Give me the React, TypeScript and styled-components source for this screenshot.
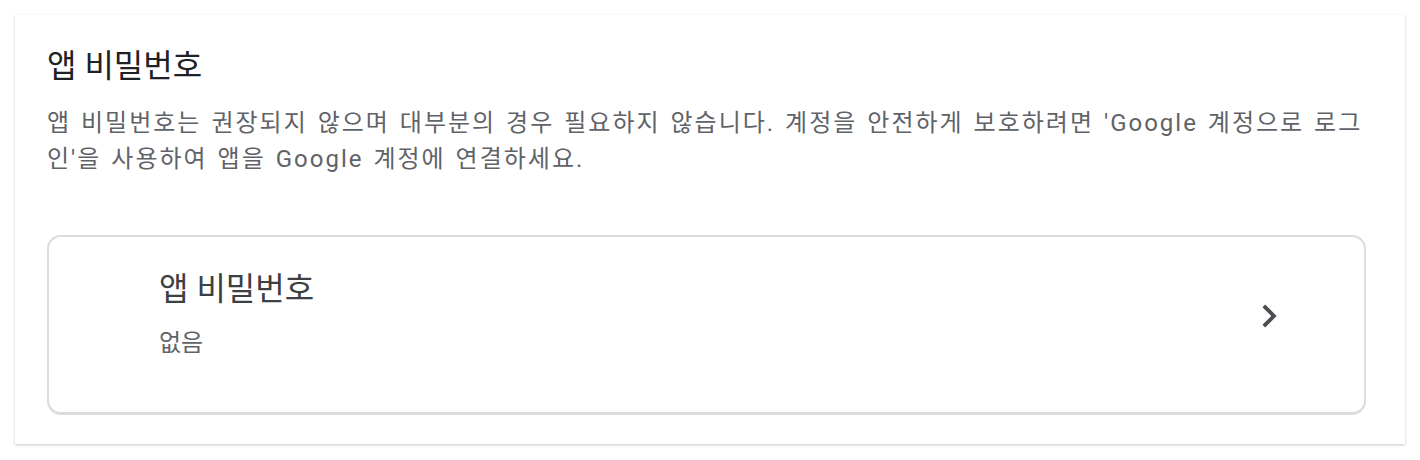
import React from "react";
import styled, { createGlobalStyle } from "styled-components";

const Global = createGlobalStyle`
  html, body { margin: 0; padding: 0; background: #ffffff; }
  body { font-family: Roboto, "Noto Sans CJK KR", sans-serif; }
`;

const Page = styled.div`
  padding: 15px;
`;

const Card = styled.section`
  background: #ffffff;
  box-shadow: 0 1px 3px rgba(60, 64, 67, 0.2), 0 1px 2px rgba(60, 64, 67, 0.1);
  padding: 31px 39px 29px 32px;
  display: flex;
  flex-direction: column;
`;

const Heading = styled.h2`
  margin: 0;
  font-size: 32px;
  line-height: 40px;
  font-weight: 400;
  color: #202124;
`;

const Description = styled.p`
  margin: 19px 0 0 0;
  font-size: 24px;
  line-height: 36px;
  letter-spacing: 2px;
  word-spacing: 2px;
  color: #5f6368;
`;

const Item = styled.button`
  margin-top: 58px;
  display: flex;
  align-items: center;
  width: 100%;
  height: 180px;
  box-sizing: border-box;
  background: #fff;
  border: 2px solid #dadce0;
  border-bottom-width: 3px;
  border-radius: 14px;
  padding: 32px 72px 54px 110px;
  text-align: left;
  cursor: pointer;
  font-family: inherit;
`;

const ItemText = styled.div`
  flex: 1;
  display: flex;
  flex-direction: column;
  gap: 19px;
`;

const ItemTitle = styled.div`
  font-size: 32px;
  line-height: 40px;
  color: #3c4043;
`;

const ItemValue = styled.div`
  font-size: 24px;
  line-height: 30px;
  color: #5f6368;
`;

const ChevronBox = styled.span`
  display: flex;
  width: 46px;
  height: 46px;
  margin-top: 5px;
`;

const Chevron = () => (
  <ChevronBox>
    <svg width="46" height="46" viewBox="0 0 24 24" aria-hidden="true">
      <path d="M10 6 8.59 7.41 13.17 12l-4.58 4.59L10 18l6-6z" fill="#4a4d51" />
    </svg>
  </ChevronBox>
);

export default function App() {
  return (
    <>
      <Global />
      <Page>
        <Card>
          <Heading>앱 비밀번호</Heading>
          <Description>
            앱 비밀번호는 권장되지 않으며 대부분의 경우 필요하지 않습니다. 계정을 안전하게 보호하려면 'Google 계정으로 로그
            인'을 사용하여 앱을 Google 계정에 연결하세요.
          </Description>
          <Item>
            <ItemText>
              <ItemTitle>앱 비밀번호</ItemTitle>
              <ItemValue>없음</ItemValue>
            </ItemText>
            <Chevron />
          </Item>
        </Card>
      </Page>
    </>
  );
}
